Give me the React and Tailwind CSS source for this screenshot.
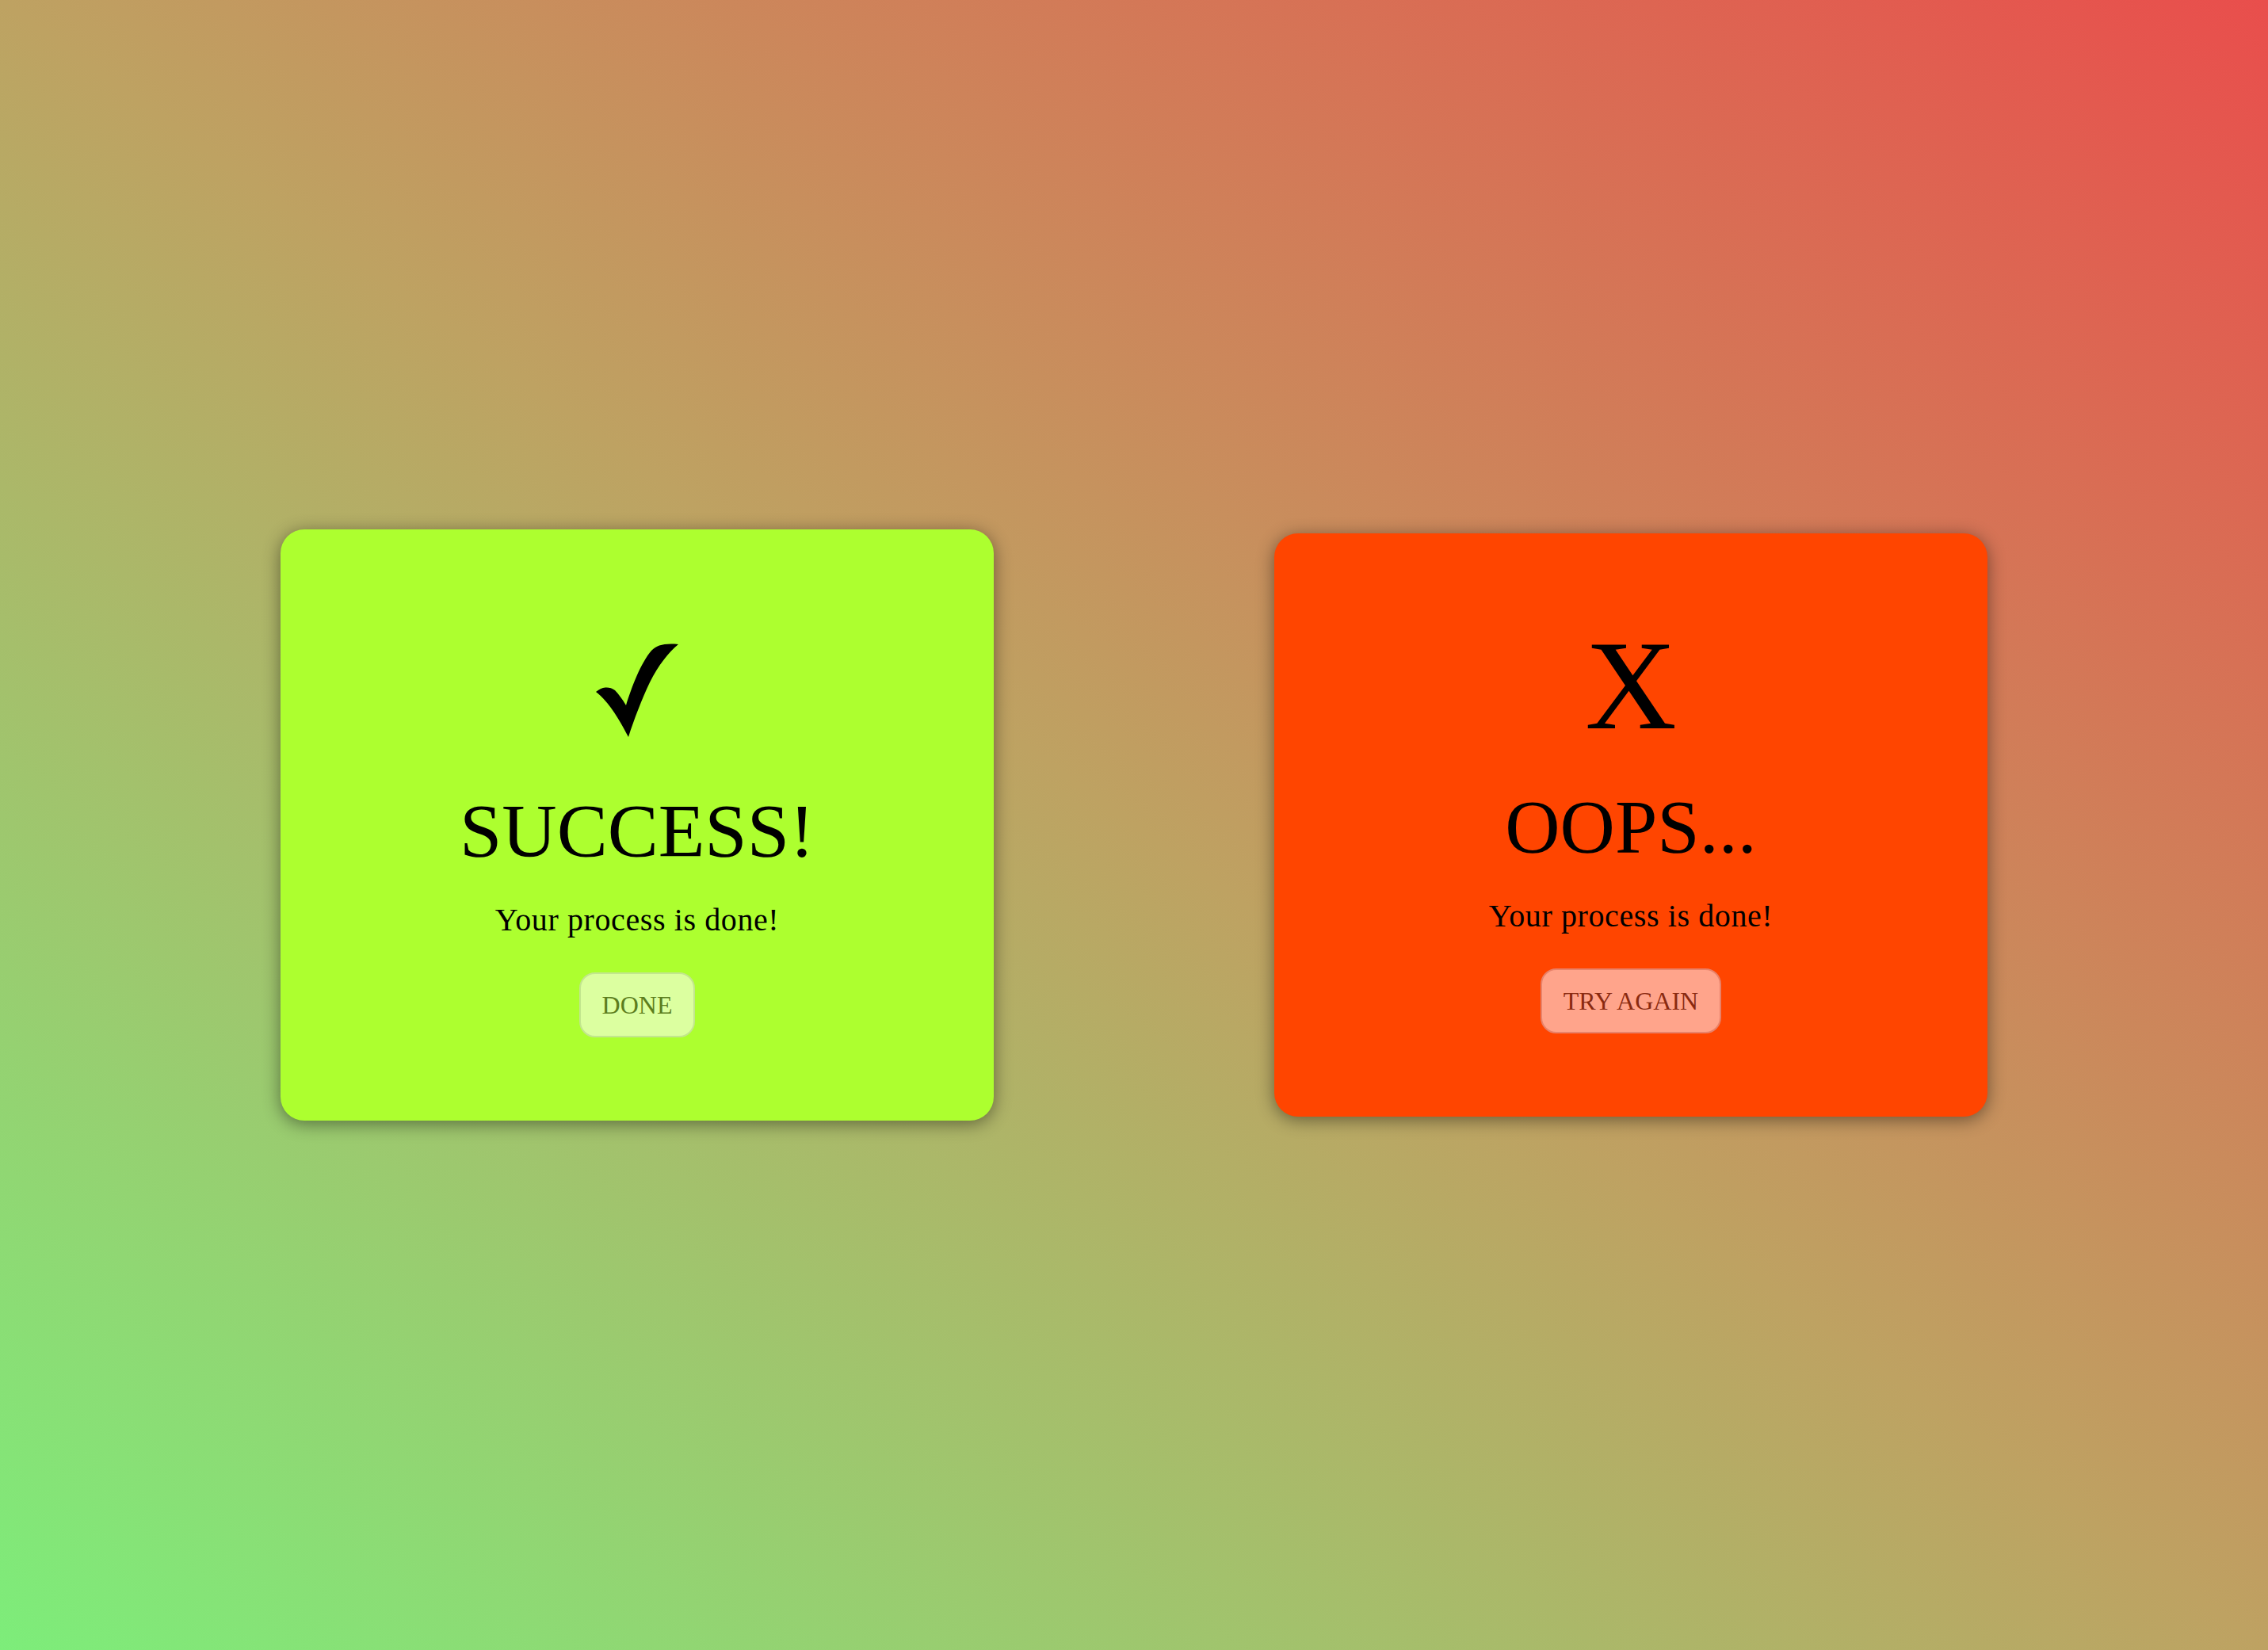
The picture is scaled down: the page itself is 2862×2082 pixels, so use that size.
import React from "react";

function CheckIcon() {
  return (
    <svg width="104" height="118" viewBox="0 0 104 118" aria-hidden="true">
      <path
        d="M0 61 C 7 55, 16 53, 24 59 C 29 64, 33 70, 38 78 C 45 55, 57 24, 70 9 C 77 2, 86 -0.5, 104 1 C 91 12, 79 27, 68 49 C 58 70, 48 96, 41 118 C 31 99, 17 74, 0 61 Z"
        fill="#000"
      />
    </svg>
  );
}

function Card({ bg, icon, iconH, title, btn, btnCls }) {
  return (
    <div
      className={`w-[900px] flex flex-col items-center rounded-[30px] pt-[112px] pb-[105px] shadow-[0_4px_22px_rgba(0,0,0,0.45)] ${bg}`}
    >
      <div className={`${iconH} flex flex-col items-center text-[160px] leading-none text-black`}>
        {icon}
      </div>
      <h1 className="mt-[51px] text-[96px] leading-none text-black font-normal">{title}</h1>
      <p className="mt-[44px] text-[40px] leading-none tracking-[0.6px] text-black">Your process is done!</p>
      <button
        className={`mt-[46px] h-[82px] px-[27px] border-2 rounded-[20px] text-[32px] leading-none ${btnCls}`}
      >
        {btn}
      </button>
    </div>
  );
}

export default function App() {
  return (
    <div
      className="w-full h-[2082px] flex items-center justify-evenly bg-linear-to-tr/srgb from-[#7ded7a] via-[#bea262] to-[#e94e4c]"
      style={{ fontFamily: '"Liberation Serif", "Times New Roman", serif' }}
    >
      <Card
        bg="bg-[#adff2f]"
        iconH="h-[170px] pt-[32px]"
        icon={<CheckIcon />}
        title="SUCCESS!"
        btn="DONE"
        btnCls="bg-[#dcffa0] border-[#c2e68e] text-[#5c7d1d]"
      />
      <Card
        bg="bg-[#ff4500]"
        iconH="h-[160px]"
        icon={<span>X</span>}
        title="OOPS..."
        btn="TRY AGAIN"
        btnCls="bg-[#ffa48b] border-[#e8826a] text-[#8a2a10]"
      />
    </div>
  );
}
